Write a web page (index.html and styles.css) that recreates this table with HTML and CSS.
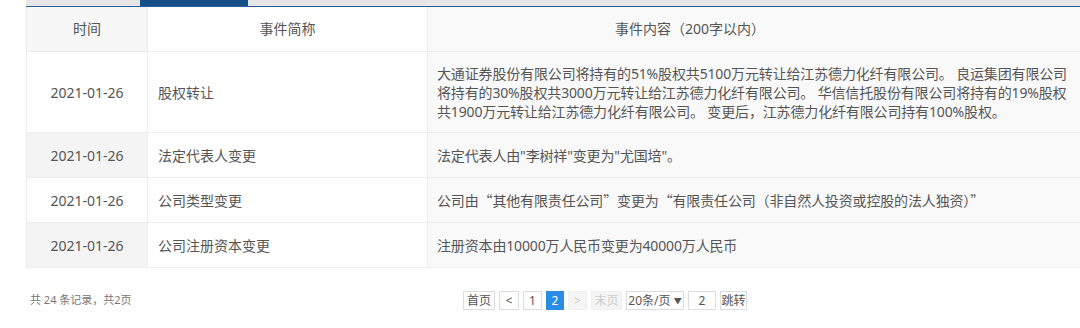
FILE: index.html
```html
<!DOCTYPE html>
<html lang="zh-CN">
<head>
<meta charset="utf-8">
<title>变更记录</title>
<link rel="stylesheet" href="styles.css">
</head>
<body>
<div class="page">
  <div class="tabbar">
    <div class="tab-spacer"></div>
    <div class="tab-active"></div>
  </div>
  <table class="events">
    <colgroup>
      <col class="c-time">
      <col class="c-name">
      <col class="c-content">
    </colgroup>
    <thead>
      <tr>
        <th class="col-time">时间</th>
        <th class="col-name">事件简称</th>
        <th class="col-content">事件内容（200字以内）</th>
      </tr>
    </thead>
    <tbody>
      <tr>
        <td class="col-time">2021-01-26</td>
        <td class="col-name">股权转让</td>
        <td class="col-content">大通证券股份有限公司将持有的51%股权共5100万元转让给江苏德力化纤有限公司。 良运集团有限公司<br>将持有的30%股权共3000万元转让给江苏德力化纤有限公司。 华信信托股份有限公司将持有的19%股权<br>共1900万元转让给江苏德力化纤有限公司。 变更后，江苏德力化纤有限公司持有100%股权。</td>
      </tr>
      <tr class="alt">
        <td class="col-time">2021-01-26</td>
        <td class="col-name">法定代表人变更</td>
        <td class="col-content">法定代表人由"李树祥"变更为"尤国培"。</td>
      </tr>
      <tr>
        <td class="col-time">2021-01-26</td>
        <td class="col-name">公司类型变更</td>
        <td class="col-content">公司由<span class="fq">“</span>其他有限责任公司<span class="fq">”</span>变更为<span class="fq">“</span>有限责任公司（非自然人投资或控股的法人独资）<span class="fq">”</span></td>
      </tr>
      <tr class="alt">
        <td class="col-time">2021-01-26</td>
        <td class="col-name">公司注册资本变更</td>
        <td class="col-content">注册资本由10000万人民币变更为40000万人民币</td>
      </tr>
    </tbody>
  </table>
  <div class="footer">
    <div class="summary">共 24 条记录，共2页</div>
    <div class="pager">
      <span class="pg w-first">首页</span>
      <span class="pg w-prev">&lt;</span>
      <span class="pg w-1">1</span>
      <span class="pg w-2 active">2</span>
      <span class="pg w-next disabled">&gt;</span>
      <span class="pg w-last disabled">末页</span>
      <span class="pg w-size">20条/页 <span class="caret">▼</span></span>
      <span class="pg w-input">2</span>
      <span class="pg w-go">跳转</span>
    </div>
  </div>
</div>
</body>
</html>
```

FILE: styles.css
```css
html, body {
  margin: 0;
  padding: 0;
  background: #fff;
}
body {
  width: 1080px;
  height: 328px;
  overflow: hidden;
  font-family: "Noto Sans", "Noto Sans CJK SC", sans-serif;
  color: #555;
}
.page {
  padding-left: 26px;
}
.tabbar {
  display: flex;
  height: 6px;
  background: #e6e6e6;
  border-bottom: 1px solid #2c5d92;
  width: 1100px;
}
.tab-spacer {
  width: 114px;
}
.tab-active {
  width: 108px;
  background: #144f85;
}
.events {
  border-collapse: collapse;
  table-layout: fixed;
  width: 1100px;
  font-size: 14px;
  line-height: 19px;
}
.c-time { width: 121px; }
.c-name { width: 280px; }
.events th,
.events td {
  border: 1px solid #ededed;
  border-top: none;
  font-weight: normal;
  vertical-align: middle;
  padding: 12px 10px 11px;
}
.events thead tr { height: 44px; }
.events tbody tr { height: 45px; }
.events th {
  padding-top: 0;
  padding-bottom: 0;
  text-align: center;
}
.events th.col-time { background: #f7f7f7; }
.events th.col-name { background: #fff; }
.events th.col-content {
  background: #f9f9f9;
  text-align: left;
  padding-left: 187px;
}
.events td.col-time {
  text-align: center;
  background: #fff;
}
.events tr.alt td.col-time { background: #f4f4f4; }
.events td.col-name {
  background: #fff;
  padding-left: 10px;
}
.events td.col-content {
  background: #f9f9f9;
  padding-left: 9px;
  white-space: nowrap;
  letter-spacing: -0.15px;
}
.fq {
  font-family: "Noto Sans CJK SC", sans-serif;
  font-feature-settings: "fwid" 1;
}
.footer {
  display: flex;
  align-items: center;
  margin-top: 23px;
  font-size: 12px;
}
.summary {
  width: 437px;
  padding-left: 4px;
  box-sizing: border-box;
  color: #777;
  font-size: 11px;
  margin-top: -3px;
}
.pager {
  display: flex;
  gap: 4px;
  align-items: center;
}
.pg {
  box-sizing: border-box;
  height: 19px;
  line-height: 17px;
  border: 1px solid #ddd;
  background: #fff;
  color: #555;
  text-align: center;
  font-size: 12px;
  white-space: nowrap;
}
.pg.active {
  background: #2b8ce6;
  border-color: #2b8ce6;
  color: #fff;
}
.pg.disabled {
  background: #f5f5f5;
  border-color: #f0f0f0;
  color: #ccc;
}
.w-first { width: 32px; }
.w-prev { width: 20px; }
.w-1 { width: 19px; }
.w-2 { width: 18px; }
.w-next { width: 19px; }
.w-last { width: 31px; }
.w-size { width: 58px; }
.w-input { width: 28px; }
.w-go { width: 27px; }
.caret {
  font-size: 8px;
  vertical-align: 1px;
}
```
